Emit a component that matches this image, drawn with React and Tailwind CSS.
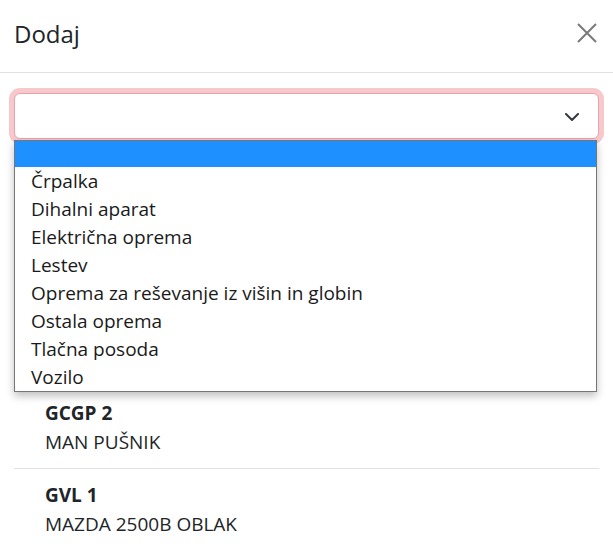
import { useState } from 'react';

const categories = [
  '',
  'Črpalka',
  'Dihalni aparat',
  'Električna oprema',
  'Lestev',
  'Oprema za reševanje iz višin in globin',
  'Ostala oprema',
  'Tlačna posoda',
  'Vozilo',
];

const vehicles = [
  { code: 'GCGP 2', name: 'MAN PUŠNIK' },
  { code: 'GVL 1', name: 'MAZDA 2500B OBLAK' },
];

const App = () => {
  const [selected] = useState(0);

  return (
    <div className="w-[613px] h-[544px] bg-white overflow-hidden text-[#212529] font-['Open_Sans',sans-serif]">
      {/* HEADER */}
      <div className="h-[73px] flex items-start justify-between pl-[14px] pr-[16px] pt-[19px] border-b border-[#dee2e6]">
        <h5 className="text-[24px] leading-[29px] font-normal">Dodaj</h5>
        <button className="mt-[4px] w-[20px] h-[20px] text-[#7a7a7a]">
          <svg viewBox="0 0 20 20" width="20" height="20" fill="none" stroke="currentColor" strokeWidth="2">
            <path d="M1 1l18 18M19 1L1 19" />
          </svg>
        </button>
      </div>

      {/* BODY */}
      <div className="px-[14px] pt-[20px] relative">
        <div className="relative h-[46px] rounded-[6px] border border-[#eba1a7] shadow-[0_0_0_5px_#f7c8cc] bg-white">
          <svg
            className="absolute right-[19px] top-[19px]"
            width="14"
            height="8"
            viewBox="0 0 14 8"
            fill="none"
            stroke="#343a40"
            strokeWidth="2"
            strokeLinecap="round"
            strokeLinejoin="round"
          >
            <path d="M1 1l6 6 6-6" />
          </svg>
        </div>

        {/* NATIVE SELECT POPUP */}
        <div className="absolute left-[14px] right-[16px] top-[67px] z-10 bg-white border border-[#767676] shadow-[0_4px_8px_rgba(0,0,0,0.25)] text-[19px] text-[#1a1a1a]">
          {categories.map((c, i) => (
            <div
              key={i}
              className={`pl-[16px] ${i === 0 ? 'h-[26px]' : 'h-[28px] leading-[28px]'} ${i === selected ? 'bg-[#1e90ff] text-white' : ''}`}
            >
              {c}
            </div>
          ))}
        </div>

        {/* LIST */}
        <div className="mt-[248px]">
          {vehicles.map((v, i) => (
            <div key={v.code} className={`pl-[31px] pt-[11px] pb-[12px] ${i === 0 ? 'border-b border-[#dee2e6]' : ''}`}>
              <div className="text-[19px] leading-[30px] font-bold">{v.code}</div>
              <div className="text-[19px] leading-[28px]">{v.name}</div>
            </div>
          ))}
        </div>
      </div>
    </div>
  );
};

export default App;
